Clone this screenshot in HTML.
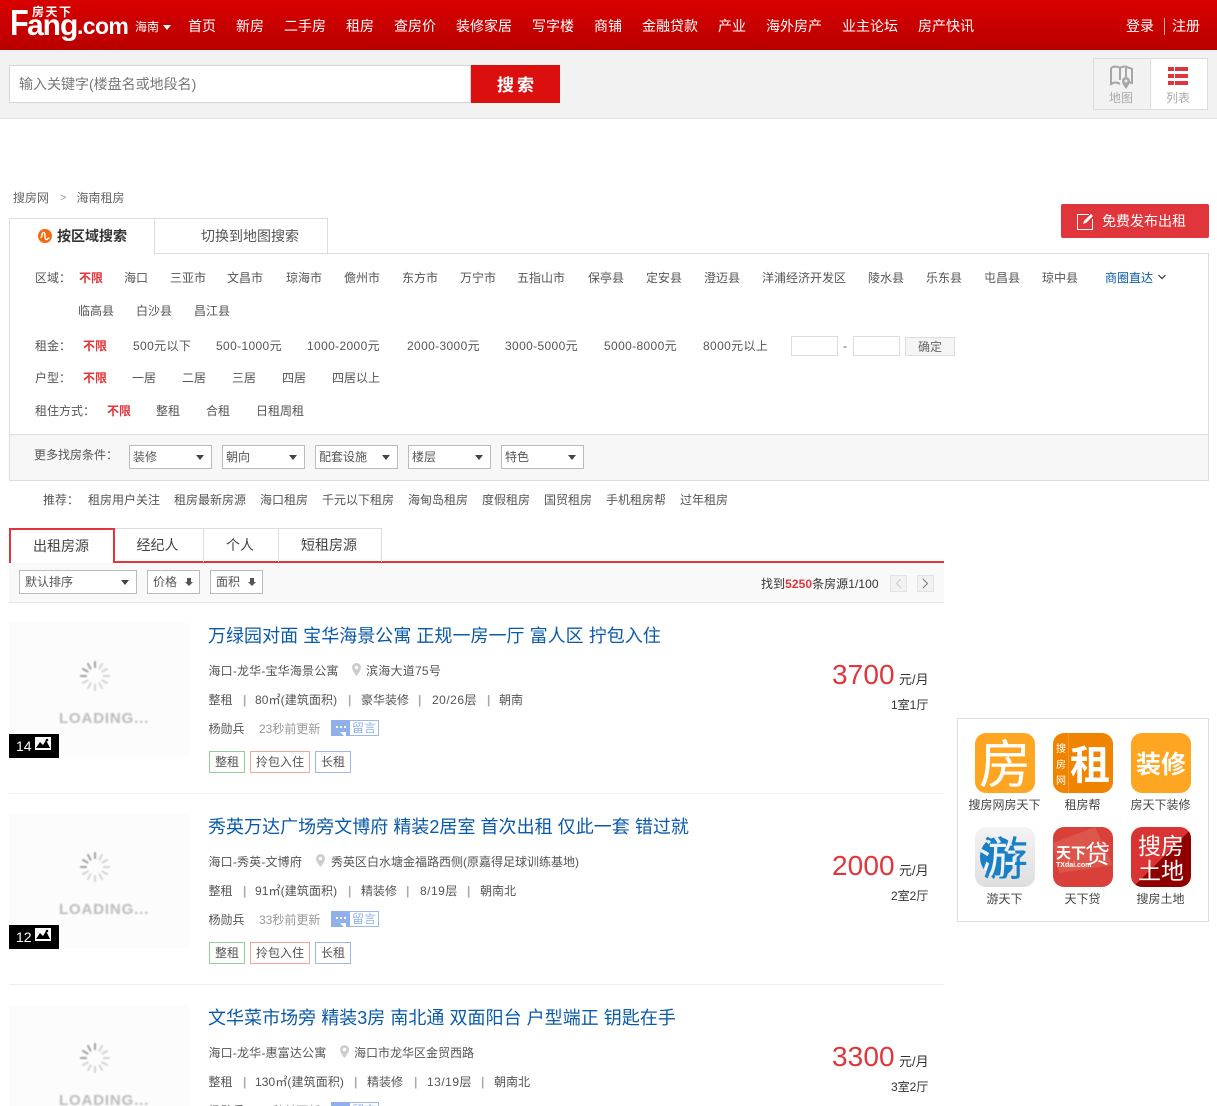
<!DOCTYPE html>
<html lang="zh"><head><meta charset="utf-8"><title>海南租房</title>
<style>
*{box-sizing:border-box}
html,body{margin:0;padding:0;width:1217px;height:1106px;overflow:hidden;background:#fff}
body{position:relative;font:12px/20px "Liberation Sans","Noto Sans CJK SC",sans-serif;color:#555}
.t,.b{position:absolute;white-space:nowrap}
.t{line-height:20px;font-size:12px}
.n{color:#fff;font-size:14px;top:16px}
.r{color:#e0363b;font-weight:bold}
.d{color:#333}
.dg{letter-spacing:.36px}
.ad{letter-spacing:.17px}
.s{position:absolute;border:1px solid #bbb;background:#fff;height:24px;line-height:22px;padding-left:3px;color:#555;top:445px}
.s:after,.ar:after{content:"";position:absolute;right:7px;top:9px;border:4px solid transparent;border-top:5px solid #444;border-bottom:0}
.tab{position:absolute;top:528px;height:34px;border:1px solid #ddd;border-left:0;border-bottom:0;text-align:center;line-height:33px;font-size:14px;color:#444;padding-right:2px}
.sb{position:absolute;top:570px;height:24px;border:1px solid #bbb;background:#fff;line-height:22px;color:#555;padding-left:5px}
.dn{position:absolute;right:8px;top:7px;width:4px;height:5px;background:#555}
.dn:after{content:"";position:absolute;left:-2px;top:4px;border:4px solid transparent;border-top:4px solid #555;border-bottom:0}
.img{position:absolute;left:9px;width:180px;height:134px;background:#fcfcfc}
.load{position:absolute;left:50px;top:87px;font:bold 15px "Liberation Sans",sans-serif;color:#bbb;filter:blur(.9px);letter-spacing:.85px}
.spin{position:absolute;left:69px;top:36px;filter:blur(.6px)}
.bd{position:absolute;left:0;top:111px;width:50px;height:24px;background:#000;color:#fff;font-size:14px;line-height:25px;padding-left:7px}
.bd svg{position:absolute;left:26px;top:3px}
.ti{position:absolute;left:208px;font-size:18px;line-height:26px;color:#0a5aaa;white-space:nowrap;letter-spacing:.03px}
.sep{position:absolute;color:#aaa;font-weight:bold}
.tag{position:absolute;height:22px;line-height:20px;border:1px solid;text-align:center;color:#555}
.g{border-color:#99cc99;left:209px;width:36px}.o{border-color:#efa79a;left:250px;width:60px}.bl{border-color:#9db8e8;left:315px;width:36px}
.pr{position:absolute;font-size:28px;line-height:34px;color:#e0363b;left:832px;letter-spacing:.1px}
.line{position:absolute;left:9px;width:935px;height:1px;background:#eee}
.msg{position:absolute;left:331px;width:48px;height:16px;border:1px solid #9db8e8;color:#8fb0ea;line-height:14px;padding-left:20px;font-size:12px}
.msg i{position:absolute;left:-1px;top:-1px;width:19px;height:16px;background:#8fb0ea}
.msg i:after{content:"";position:absolute;left:5px;top:6px;width:2px;height:2px;background:#fff;box-shadow:4px 0 #fff,8px 0 #fff}
.msg b{position:absolute;left:8px;top:11px;border:3px solid transparent;border-top:3px solid #fff;border-right:3px solid #fff}
.ic{position:absolute;width:60px;height:60px;border-radius:11px;overflow:hidden;color:#fff;text-align:center;font-family:"Noto Sans CJK SC",sans-serif;font-weight:bold}
.lb{position:absolute;width:90px;text-align:center;color:#444;line-height:20px;padding-right:1px}
</style></head><body>

<!-- header -->
<div class="b" style="left:0;top:0;width:1217px;height:50px;background:linear-gradient(#d90000,#b90000)"></div>
<div class="b" style="left:10px;top:1px;font:bold 36px/44px 'Liberation Sans',sans-serif;color:#fff;transform:scaleX(.85);transform-origin:0 0">F</div>
<div class="b" style="left:27px;top:8px;font:bold 30px/36px 'Liberation Sans',sans-serif;color:#fff;letter-spacing:-1px">ang</div>
<div class="b" style="left:77px;top:10px;font:bold 23px/32px 'Liberation Sans',sans-serif;color:#fff;letter-spacing:-.6px">.com</div>
<div class="b" style="left:32px;top:5px;font:bold 12px/13px 'Noto Sans CJK SC',sans-serif;color:#fff;letter-spacing:1.500px">房天下</div>
<span class="t" style="left:135px;top:17px;color:#fff">海南</span>
<div class="b" style="left:163px;top:25px;border:4.5px solid transparent;border-top:5px solid #fff;border-bottom:0"></div>
<span class="t n" style="left:188px">首页</span><span class="t n" style="left:236px">新房</span><span class="t n" style="left:284px">二手房</span><span class="t n" style="left:346px">租房</span><span class="t n" style="left:394px">查房价</span><span class="t n" style="left:456px">装修家居</span><span class="t n" style="left:532px">写字楼</span><span class="t n" style="left:594px">商铺</span><span class="t n" style="left:642px">金融贷款</span><span class="t n" style="left:718px">产业</span><span class="t n" style="left:766px">海外房产</span><span class="t n" style="left:842px">业主论坛</span><span class="t n" style="left:918px">房产快讯</span><span class="t n" style="left:1126px">登录</span><span class="t n" style="left:1172px">注册</span>
<div class="b" style="left:1164px;top:18px;width:1px;height:17px;background:#eaa"></div>

<!-- search bar -->
<div class="b" style="left:0;top:50px;width:1217px;height:69px;background:#f2f2f2;border-bottom:1px solid #e3e3e3"></div>
<div class="b" style="left:9px;top:65px;width:462px;height:38px;background:#fff;border:1px solid #d4d4d4;font-size:14px;line-height:36px;padding-left:9px;color:#777">输入关键字(楼盘名或地段名)</div>
<div class="b" style="left:471px;top:65px;width:89px;height:38px;background:#dc0f0f;color:#fff;font:bold 17px/37px 'Noto Sans CJK SC',sans-serif;padding-left:26px;letter-spacing:3px">搜索</div>
<div class="b" style="left:1093px;top:58px;width:115px;height:52px;border:1px solid #ddd;background:#f2f2f2"></div>
<div class="b" style="left:1150px;top:59px;width:57px;height:50px;background:#fff;border-left:1px solid #ddd"></div>
<svg class="b" style="left:1109px;top:65px" width="26" height="26" viewBox="0 0 26 26" fill="none" stroke="#a6a6a6" stroke-width="2"><path d="M2 3c3-2 6-2 9 0 3-2 6-2 9 0 1 0 2 0 3 1v14l-4-1M2 3v16c3-2 6-2 9 0M11 3v12M17 3v9"/><path d="M17 12a4 4 0 0 1 4 4c0 3-4 8-4 8s-4-5-4-8a4 4 0 0 1 4-4z" fill="#a6a6a6" stroke="none"/><circle cx="17" cy="16" r="1.5" fill="#f2f2f2" stroke="none"/></svg>
<span class="t" style="left:1109px;top:88px;color:#aaa">地图</span>
<svg class="b" style="left:1167px;top:67px" width="22" height="19"><g fill="#e0363b"><rect x="1" width="6" height="4"/><rect x="8" width="13" height="4"/><rect x="1" y="7" width="6" height="4"/><rect x="8" y="7" width="13" height="4"/><rect x="1" y="14" width="6" height="4"/><rect x="8" y="14" width="13" height="4"/></g></svg>
<span class="t" style="left:1166px;top:88px;color:#aaa">列表</span>

<!-- breadcrumb -->
<span class="t" style="left:13px;top:188px;color:#666">搜房网</span><span class="t" style="left:60px;top:188px;color:#999;font-size:11px">&gt;</span><span class="t" style="left:76.500px;top:188px;color:#666">海南租房</span>

<!-- panel -->
<div class="b" style="left:9px;top:253px;width:1200px;height:228px;border:1px solid #ddd;background:#fff"></div>
<div class="b" style="left:10px;top:434px;width:1198px;height:46px;background:#f7f7f7;border-top:1px solid #ddd"></div>
<div class="b" style="left:9px;top:218px;width:146px;height:37px;border:1px solid #ddd;border-bottom:0;background:#fff"></div>
<div class="b" style="left:154px;top:218px;width:174px;height:36px;border:1px solid #ddd;background:#fff;padding-left:46px;line-height:35px;color:#555;font-size:14px">切换到地图搜索</div>
<svg class="b" style="left:38px;top:229px" width="14" height="14"><circle cx="7" cy="7" r="7" fill="#f26a11"/><path d="M2.5 8.5c2 0 1-5 3-5 1.500 0 1.500 2 1.500 3.500s0 3.500 1.500 3.500 1-1.500 3-1.500" fill="none" stroke="#fff" stroke-width="1.500"/></svg>
<span class="t" style="left:57px;top:226px;color:#333;font-weight:bold;font-size:14px">按区域搜索</span>
<div class="b" style="left:1061px;top:204px;width:148px;height:34px;background:#e0363b;border-radius:2px;color:#fff;font-size:14px;line-height:34px;padding-left:41px">免费发布出租</div>
<svg class="b" style="left:1077px;top:213px" width="17" height="17" fill="none" stroke="#fff"><path d="M12 1.500H.5v15h15V6" stroke-width="1"/><path d="M6 11l1-3 7-7 2 2-7 7z" fill="#fff" stroke="none"/></svg>

<span class="t" style="left:35px;top:268px">区域：</span><span class="t r" style="left:79px;top:268px">不限</span>
<span class="t" style="left:124px;top:268px">海口</span><span class="t" style="left:170px;top:268px">三亚市</span><span class="t" style="left:227px;top:268px">文昌市</span><span class="t" style="left:286px;top:268px">琼海市</span><span class="t" style="left:344px;top:268px">儋州市</span><span class="t" style="left:402px;top:268px">东方市</span><span class="t" style="left:460px;top:268px">万宁市</span><span class="t" style="left:517px;top:268px">五指山市</span><span class="t" style="left:588px;top:268px">保亭县</span><span class="t" style="left:646px;top:268px">定安县</span><span class="t" style="left:704px;top:268px">澄迈县</span><span class="t" style="left:762px;top:268px">洋浦经济开发区</span><span class="t" style="left:868px;top:268px">陵水县</span><span class="t" style="left:926px;top:268px">乐东县</span><span class="t" style="left:984px;top:268px">屯昌县</span><span class="t" style="left:1042px;top:268px">琼中县</span><span class="t" style="left:1105px;top:268px;color:#0a5aaa">商圈直达</span>
<svg class="b" style="left:1158px;top:274px" width="8" height="6" fill="none" stroke="#333" stroke-width="1.200"><path d="M.5 1l3.500 3.500L7.500 1"/></svg>
<span class="t" style="left:78px;top:301px">临高县</span><span class="t" style="left:136px;top:301px">白沙县</span><span class="t" style="left:194px;top:301px">昌江县</span>

<span class="t" style="left:35px;top:336px">租金：</span><span class="t r" style="left:83px;top:336px">不限</span><span class="t dg" style="left:133px;top:336px">500元以下</span><span class="t dg" style="left:216px;top:336px">500-1000元</span><span class="t dg" style="left:307px;top:336px">1000-2000元</span><span class="t dg" style="left:407px;top:336px">2000-3000元</span><span class="t dg" style="left:505px;top:336px">3000-5000元</span><span class="t dg" style="left:604px;top:336px">5000-8000元</span><span class="t dg" style="left:703px;top:336px">8000元以上</span>
<div class="b" style="left:791px;top:336px;width:47px;height:20px;border:1px solid #ddd"></div><span class="t" style="left:843px;top:336px">-</span><div class="b" style="left:853px;top:336px;width:47px;height:20px;border:1px solid #ddd"></div>
<div class="b" style="left:905px;top:337px;width:50px;height:19px;border:1px solid #ddd;background:#f5f5f5;text-align:center;line-height:19px;color:#666">确定</div>

<span class="t" style="left:35px;top:368px">户型：</span><span class="t r" style="left:83px;top:368px">不限</span><span class="t" style="left:132px;top:368px">一居</span><span class="t" style="left:182px;top:368px">二居</span><span class="t" style="left:232px;top:368px">三居</span><span class="t" style="left:282px;top:368px">四居</span><span class="t" style="left:332px;top:368px">四居以上</span>
<span class="t" style="left:35px;top:401px">租住方式：</span><span class="t r" style="left:107px;top:401px">不限</span><span class="t" style="left:156px;top:401px">整租</span><span class="t" style="left:206px;top:401px">合租</span><span class="t" style="left:256px;top:401px">日租周租</span>

<span class="t" style="left:34px;top:445px">更多找房条件：</span>
<div class="s" style="left:129px;width:83px">装修</div><div class="s" style="left:222px;width:83px">朝向</div><div class="s" style="left:315px;width:83px">配套设施</div><div class="s" style="left:408px;width:83px">楼层</div><div class="s" style="left:501px;width:83px">特色</div>

<span class="t" style="left:43px;top:490px">推荐：</span><span class="t" style="left:88px;top:490px">租房用户关注</span><span class="t" style="left:174px;top:490px">租房最新房源</span><span class="t" style="left:260px;top:490px">海口租房</span><span class="t" style="left:322px;top:490px">千元以下租房</span><span class="t" style="left:408px;top:490px">海甸岛租房</span><span class="t" style="left:482px;top:490px">度假租房</span><span class="t" style="left:544px;top:490px">国贸租房</span><span class="t" style="left:606px;top:490px">手机租房帮</span><span class="t" style="left:680px;top:490px">过年租房</span>

<!-- list tabs -->
<div class="b" style="left:9px;top:561px;width:935px;height:2px;background:#e0363b"></div>
<div class="tab" style="left:114px;width:90px">经纪人</div><div class="tab" style="left:204px;width:75px">个人</div><div class="tab" style="left:279px;width:103px">短租房源</div>
<div class="tab" style="left:9px;width:106px;height:35px;border:2px solid #e0363b;border-bottom:0;background:#fff;line-height:32px;z-index:2">出租房源</div>
<div class="b" style="left:9px;top:563px;width:935px;height:40px;background:#f9f9f9;border-bottom:1px solid #e5e5e5"></div>
<div class="sb ar" style="left:19px;width:118px">默认排序</div>
<div class="sb" style="left:147px;width:53px">价格<i class="dn"></i></div>
<div class="sb" style="left:210px;width:53px">面积<i class="dn"></i></div>
<span class="t d" style="left:761px;top:574px;letter-spacing:.06px">找到<span class="r">5250</span>条房源1/100</span>
<div class="b" style="left:890px;top:575px;width:17px;height:17px;border:1px solid #e3e3e3;background:#f2f2f2"></div>
<div class="b" style="left:917px;top:575px;width:17px;height:17px;border:1px solid #e3e3e3;background:#f2f2f2"></div>
<svg class="b" style="left:890px;top:575px" width="44" height="17" fill="none"><path d="M11 4L6.500 8.500 11 13" stroke="#ccc"/><path d="M33 4l4.500 4.500L33 13" stroke="#777"/></svg>

<!-- item 1 -->
<div class="img" style="top:623px">
<svg class="spin" width="34" height="34" viewBox="-17 -17 34 34" stroke-width="2.200" stroke-linecap="round"><g stroke="#d8d8d8"><path d="M0-14v5M7-12l-2.500 4.500M12-7l-4.500 2.500M14 0H9M12 7L7.500 4.500M7 12L4.500 7.500M0 14V9M-7 12l2.500-4.500M-12 7l4.500-2.500"/></g><g stroke="#aaa"><path d="M-14 0h5M-12-7l4.500 2.500M-7-12l2.500 4.500M0-14v5"/></g></svg>
<div class="load">LOADING...</div><div class="bd">14<svg width="16" height="13"><rect width="16" height="13" fill="#fff"/><path d="M1 11l4-6 3 3 3-5 4 8z" fill="#000"/><circle cx="12" cy="3" r="1.300" fill="#000"/></svg></div></div>
<div class="ti" style="top:623px">万绿园对面 宝华海景公寓 正规一房一厅 富人区 拧包入住</div>
<span class="t ad" style="left:208.500px;top:661px">海口-龙华-宝华海景公寓</span>
<svg class="b" style="left:352px;top:663px" width="9" height="13"><path d="M4.500 0a4.500 4.500 0 0 1 4.500 4.500C9 7.500 4.500 13 4.500 13S0 7.500 0 4.500A4.500 4.500 0 0 1 4.500 0z" fill="#ccc"/><circle cx="4.500" cy="4.500" r="1.800" fill="#fff"/></svg>
<span class="t" style="left:366px;top:661px;letter-spacing:.25px">滨海大道75号</span>
<span class="t" style="left:208.500px;top:690px">整租</span><span class="t sep" style="left:243px;top:690px">|</span><span class="t" style="left:255px;top:690px;letter-spacing:.1px">80㎡(建筑面积)</span><span class="t sep" style="left:348px;top:690px">|</span><span class="t" style="left:361px;top:690px">豪华装修</span><span class="t sep" style="left:418px;top:690px">|</span><span class="t" style="left:432px;top:690px;letter-spacing:.5px">20/26层</span><span class="t sep" style="left:487px;top:690px">|</span><span class="t" style="left:499px;top:690px">朝南</span>
<span class="t" style="left:208.500px;top:719px">杨勋兵</span><span class="t" style="left:259px;top:719px;color:#999">23秒前更新</span>
<div class="msg" style="top:720px"><i></i><b></b>留言</div>
<div class="tag g" style="top:751px">整租</div><div class="tag o" style="top:751px">拎包入住</div><div class="tag bl" style="top:751px">长租</div>
<div class="pr" style="top:658px">3700</div><span class="t d" style="left:899px;top:670px;font-size:13px">元/月</span><span class="t d" style="left:891px;top:695px">1室1厅</span>
<div class="line" style="top:793px"></div>

<!-- item 2 -->
<div class="img" style="top:814px">
<svg class="spin" width="34" height="34" viewBox="-17 -17 34 34" stroke-width="2.200" stroke-linecap="round"><g stroke="#d8d8d8"><path d="M0-14v5M7-12l-2.500 4.500M12-7l-4.500 2.500M14 0H9M12 7L7.500 4.500M7 12L4.500 7.500M0 14V9M-7 12l2.500-4.500M-12 7l4.500-2.500"/></g><g stroke="#aaa"><path d="M-14 0h5M-12-7l4.500 2.500M-7-12l2.500 4.500M0-14v5"/></g></svg>
<div class="load">LOADING...</div><div class="bd">12<svg width="16" height="13"><rect width="16" height="13" fill="#fff"/><path d="M1 11l4-6 3 3 3-5 4 8z" fill="#000"/><circle cx="12" cy="3" r="1.300" fill="#000"/></svg></div></div>
<div class="ti" style="top:814px">秀英万达广场旁文博府 精装2居室 首次出租 仅此一套 错过就</div>
<span class="t ad" style="left:208.500px;top:852px">海口-秀英-文博府</span>
<svg class="b" style="left:316px;top:854px" width="9" height="13"><path d="M4.500 0a4.500 4.500 0 0 1 4.500 4.500C9 7.500 4.500 13 4.500 13S0 7.500 0 4.500A4.500 4.500 0 0 1 4.500 0z" fill="#ccc"/><circle cx="4.500" cy="4.500" r="1.800" fill="#fff"/></svg>
<span class="t" style="left:331px;top:852px">秀英区白水塘金福路西侧(原嘉得足球训练基地)</span>
<span class="t" style="left:208.500px;top:881px">整租</span><span class="t sep" style="left:243px;top:881px">|</span><span class="t" style="left:255px;top:881px;letter-spacing:.1px">91㎡(建筑面积)</span><span class="t sep" style="left:348px;top:881px">|</span><span class="t" style="left:361px;top:881px">精装修</span><span class="t sep" style="left:406px;top:881px">|</span><span class="t" style="left:420px;top:881px;letter-spacing:.5px">8/19层</span><span class="t sep" style="left:467px;top:881px">|</span><span class="t" style="left:480px;top:881px">朝南北</span>
<span class="t" style="left:208.500px;top:910px">杨勋兵</span><span class="t" style="left:259px;top:910px;color:#999">33秒前更新</span>
<div class="msg" style="top:911px"><i></i><b></b>留言</div>
<div class="tag g" style="top:942px">整租</div><div class="tag o" style="top:942px">拎包入住</div><div class="tag bl" style="top:942px">长租</div>
<div class="pr" style="top:849px">2000</div><span class="t d" style="left:899px;top:861px;font-size:13px">元/月</span><span class="t d" style="left:891px;top:886px">2室2厅</span>
<div class="line" style="top:984px"></div>

<!-- item 3 -->
<div class="img" style="top:1005px">
<svg class="spin" width="34" height="34" viewBox="-17 -17 34 34" stroke-width="2.200" stroke-linecap="round"><g stroke="#d8d8d8"><path d="M0-14v5M7-12l-2.500 4.500M12-7l-4.500 2.500M14 0H9M12 7L7.500 4.500M7 12L4.500 7.500M0 14V9M-7 12l2.500-4.500M-12 7l4.500-2.500"/></g><g stroke="#aaa"><path d="M-14 0h5M-12-7l4.500 2.500M-7-12l2.500 4.500M0-14v5"/></g></svg>
<div class="load">LOADING...</div></div>
<div class="ti" style="top:1005px">文华菜市场旁 精装3房 南北通 双面阳台 户型端正 钥匙在手</div>
<span class="t ad" style="left:208.500px;top:1043px">海口-龙华-惠富达公寓</span>
<svg class="b" style="left:340px;top:1045px" width="9" height="13"><path d="M4.500 0a4.500 4.500 0 0 1 4.500 4.500C9 7.500 4.500 13 4.500 13S0 7.500 0 4.500A4.500 4.500 0 0 1 4.500 0z" fill="#ccc"/><circle cx="4.500" cy="4.500" r="1.800" fill="#fff"/></svg>
<span class="t" style="left:354px;top:1043px">海口市龙华区金贸西路</span>
<span class="t" style="left:208.500px;top:1072px">整租</span><span class="t sep" style="left:243px;top:1072px">|</span><span class="t" style="left:255px;top:1072px;letter-spacing:.1px">130㎡(建筑面积)</span><span class="t sep" style="left:354px;top:1072px">|</span><span class="t" style="left:367px;top:1072px">精装修</span><span class="t sep" style="left:414px;top:1072px">|</span><span class="t" style="left:427px;top:1072px;letter-spacing:.5px">13/19层</span><span class="t sep" style="left:481px;top:1072px">|</span><span class="t" style="left:494px;top:1072px">朝南北</span>
<span class="t" style="left:208.500px;top:1101px">杨勋兵</span><span class="t" style="left:259px;top:1101px;color:#999">43秒前更新</span>
<div class="msg" style="top:1102px"><i></i><b></b>留言</div>
<div class="pr" style="top:1040px">3300</div><span class="t d" style="left:899px;top:1052px;font-size:13px">元/月</span><span class="t d" style="left:891px;top:1077px">3室2厅</span>

<!-- apps -->
<div class="b" style="left:957px;top:718px;width:252px;height:204px;border:1px solid #ddd;background:#fff"></div>
<div class="ic" style="left:975px;top:733px;background:#fea621;font-size:52px;line-height:56px;font-weight:normal">房</div>
<div class="ic" style="left:1053px;top:733px;background:#f08300"><i style="position:absolute;left:15px;top:0;width:1px;height:60px;background:#f59a2a"></i><span style="position:absolute;left:1px;top:7px;width:14px;font-size:10px;line-height:16px;font-weight:normal">搜房网</span><span style="position:absolute;left:17px;top:0;font-size:40px;line-height:58px">租</span></div>
<div class="ic" style="left:1131px;top:733px;background:#fea621;font-size:25px;line-height:60px">装修</div>
<div class="ic" style="left:975px;top:827px;background:linear-gradient(#f4f4f4,#dedede);color:#1a7fc6;font-size:46px;line-height:58px;font-weight:normal">游<div style="position:absolute;left:5px;top:10px;width:36px;height:40px;border-radius:50%;background:#1a7fc6;color:#eef3f6;overflow:hidden"><span style="position:absolute;left:-2px;top:-10px;width:46px">游</span></div></div>
<div class="ic" style="left:1053px;top:827px;background:#d9403a"><svg style="position:absolute;left:0;top:0" width="60" height="60"><path d="M0 16L42 0l18 38-54 8z" fill="#e0685a" opacity=".55"/></svg><span style="position:absolute;left:3px;top:16px;font-size:15px;line-height:20px">天下</span><span style="position:absolute;left:32px;top:11px;font-size:25px;line-height:30px;font-weight:normal">贷</span><span style="position:absolute;left:3px;top:34px;font:bold 7px/10px 'Liberation Sans',sans-serif">TXdai.com</span></div>
<div class="ic" style="left:1131px;top:827px;background:linear-gradient(135deg,#d93333 52%,#8f0000 52%);font-size:23px;line-height:25px;padding-top:5px;font-weight:normal">搜房<br>土地</div>
<div class="lb" style="left:960px;top:795px">搜房网房天下</div><div class="lb" style="left:1038px;top:795px">租房帮</div><div class="lb" style="left:1116px;top:795px">房天下装修</div>
<div class="lb" style="left:960px;top:889px">游天下</div><div class="lb" style="left:1038px;top:889px">天下贷</div><div class="lb" style="left:1116px;top:889px">搜房土地</div>
</body></html>
